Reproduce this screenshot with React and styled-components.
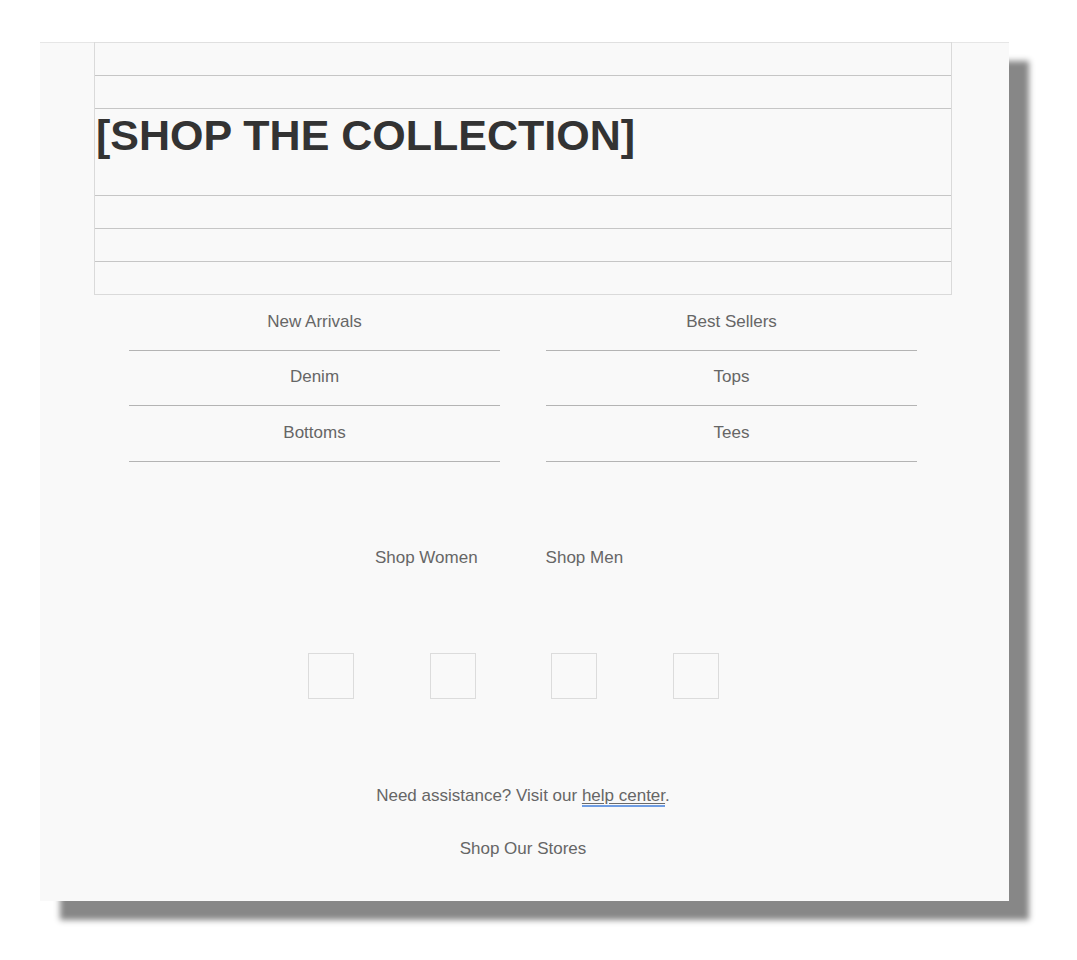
import React from "react";
import styled, { createGlobalStyle } from "styled-components";

const GlobalStyle = createGlobalStyle`
  html, body {
    margin: 0;
    padding: 0;
    background: #ffffff;
  }
  body {
    font-family: "Liberation Sans", Arial, Helvetica, sans-serif;
  }
`;

const Page = styled.div`
  padding: 42px 0 0 40px;
  height: 960px;
  box-sizing: border-box;
`;

const Card = styled.div`
  width: 969px;
  height: 859px;
  box-sizing: border-box;
  background: #f9f9f9;
  border-top: 1px solid #e6e6e6;
  box-shadow: 20px 19px 6px #878787;
  padding: 0 57px 0 54px;
`;

const Banner = styled.div`
  border-left: 1px solid #dadada;
  border-right: 1px solid #dadada;
  border-bottom: 1px solid #dadada;
  margin-top: -1px;
`;

const BannerRow = styled.div`
  height: ${(p) => p.h || 33}px;
  box-sizing: border-box;
  border-top: 1px solid ${(p) => (p.first ? "#e0e0e0" : "#c6c6c6")};
`;

const Heading = styled.h1`
  margin: 0;
  padding: 2px 0 0 1px;
  font-size: 43px;
  line-height: 49px;
  font-weight: bold;
  color: #333333;
`;

const LinkGrid = styled.div`
  display: grid;
  grid-template-columns: 1fr 1fr;
  column-gap: 46px;
  padding: 0 35px;
`;

const GridLink = styled.a`
  display: block;
  text-align: center;
  font-size: 17px;
  line-height: 18px;
  color: #666666;
  text-decoration: none;
  padding: 17.5px 0 19px;
  border-bottom: 1px solid #b4b4b4;
`;

const ShopRow = styled.div`
  display: flex;
  justify-content: center;
  gap: 68px;
  padding-right: 48px;
  margin-top: 86px;
`;

const TextLink = styled.a`
  font-size: 17px;
  line-height: 20px;
  color: #666666;
  text-decoration: none;
`;

const SocialRow = styled.div`
  display: flex;
  justify-content: center;
  gap: 75.7px;
  padding-right: 19px;
  margin-top: 85px;
`;

const SocialBox = styled.div`
  width: 46px;
  height: 46px;
  box-sizing: border-box;
  border: 1.5px solid #dcdcdc;
`;

const Note = styled.p`
  margin: 87px 0 0;
  text-align: center;
  font-size: 17px;
  line-height: 20px;
  color: #666666;
`;

const HelpLink = styled.a`
  color: #666666;
  text-decoration: underline;
  text-decoration-color: #6a6a6a;
  text-underline-offset: 2px;
  border-bottom: 2px solid #6f9de3;
`;

const StoresRow = styled.div`
  margin-top: 33px;
  text-align: center;
`;

const leftLinks = ["New Arrivals", "Denim", "Bottoms"];
const rightLinks = ["Best Sellers", "Tops", "Tees"];

export default function App() {
  const cells = [];
  leftLinks.forEach((l, i) => {
    cells.push(<GridLink key={l}>{l}</GridLink>);
    cells.push(<GridLink key={rightLinks[i]}>{rightLinks[i]}</GridLink>);
  });

  return (
    <Page>
      <GlobalStyle />
      <Card>
        <Banner>
          <BannerRow first />
          <BannerRow />
          <BannerRow h={87}>
            <Heading>[SHOP THE COLLECTION]</Heading>
          </BannerRow>
          <BannerRow />
          <BannerRow />
          <BannerRow />
        </Banner>

        <LinkGrid>{cells}</LinkGrid>

        <ShopRow>
          <TextLink>Shop Women</TextLink>
          <TextLink>Shop Men</TextLink>
        </ShopRow>

        <SocialRow>
          <SocialBox />
          <SocialBox />
          <SocialBox />
          <SocialBox />
        </SocialRow>

        <Note>
          Need assistance? Visit our <HelpLink>help center</HelpLink>.
        </Note>

        <StoresRow>
          <TextLink>Shop Our Stores</TextLink>
        </StoresRow>
      </Card>
    </Page>
  );
}
